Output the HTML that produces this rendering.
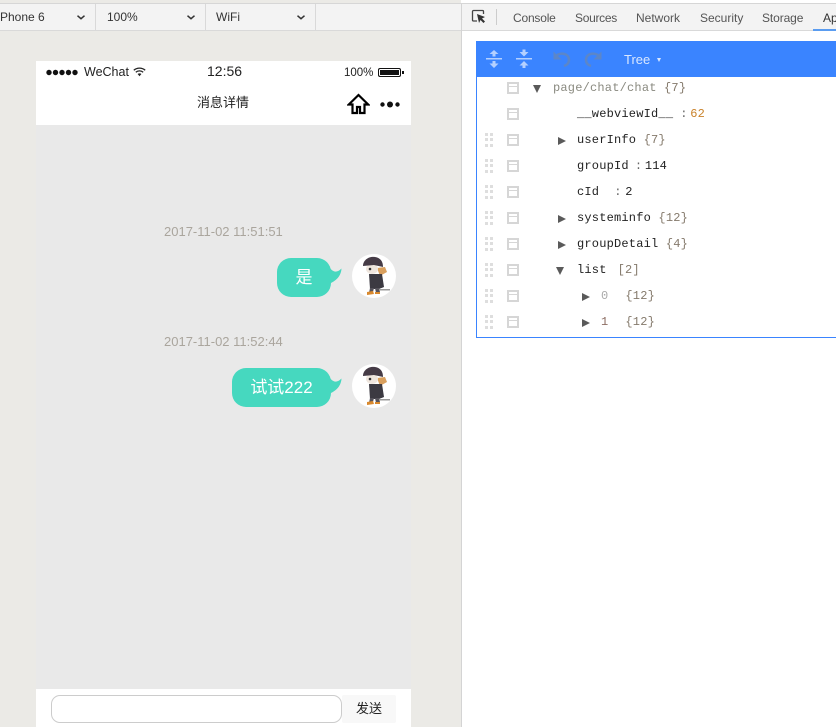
<!DOCTYPE html>
<html><head><meta charset="utf-8">
<style>
html,body{margin:0;padding:0}
body{width:836px;height:727px;overflow:hidden;position:relative;background:#fff;font-family:"Liberation Sans","Noto Sans CJK SC",sans-serif}
.a{position:absolute;white-space:nowrap}
.t{font-size:12px;color:#333;line-height:16px}
.m{position:absolute;white-space:nowrap;font-family:"Liberation Mono",monospace;font-size:12px;letter-spacing:.2px;line-height:16px;color:#222}
.g{color:#8a8a80}
.b{color:#857a6c}
.c{display:inline-block;color:#666;margin:0 6px 0 6px;letter-spacing:0;width:4px}
.cb{position:absolute;left:507px;width:8px;height:8px;border:2px solid #d6d6d6;background:linear-gradient(#d6d6d6,#d6d6d6) 0 2px/100% 1px no-repeat}
.gr{position:absolute;left:485px;width:8px;height:14px;background:
 linear-gradient(#dedede,#dedede) 0 0/3px 3px no-repeat,linear-gradient(#dedede,#dedede) 5px 0/3px 3px no-repeat,
 linear-gradient(#dedede,#dedede) 0 5px/3px 3px no-repeat,linear-gradient(#dedede,#dedede) 5px 5px/3px 3px no-repeat,
 linear-gradient(#dedede,#dedede) 0 11px/3px 3px no-repeat,linear-gradient(#dedede,#dedede) 5px 11px/3px 3px no-repeat}
.r{position:absolute;width:0;height:0;border-left:8px solid #5a5a5a;border-top:4px solid transparent;border-bottom:4px solid transparent}
.d{position:absolute;width:0;height:0;border-top:8px solid #5a5a5a;border-left:4.5px solid transparent;border-right:4.5px solid transparent}
.bub{position:absolute;background:#46d8bf;color:#fff;border-radius:14px;height:39px;line-height:39px;text-align:center;font-size:17px}
.time{position:absolute;left:164px;font-size:13px;color:#aaa59d;line-height:16px;white-space:nowrap}
.av{position:absolute;left:352px;width:44px;height:44px;border-radius:50%;background:#fff;overflow:hidden}
</style></head><body>

<!-- left simulator -->
<div class="a" style="left:0;top:0;width:461px;height:727px;background:#ebeae6"></div>
<div class="a" style="left:0;top:3px;width:836px;height:1px;background:#d6d6d6"></div>
<div class="a" style="left:0;top:4px;width:836px;height:26px;background:#f3f3f3"></div>
<div class="a" style="left:0;top:30px;width:836px;height:1px;background:#d9d9d9"></div>
<div class="a" style="left:95px;top:4px;width:1px;height:26px;background:#d9d9d9"></div>
<div class="a" style="left:205px;top:4px;width:1px;height:26px;background:#d9d9d9"></div>
<div class="a" style="left:315px;top:4px;width:1px;height:26px;background:#d9d9d9"></div>
<div class="a t" style="left:0;top:9px">Phone 6</div>
<div class="a t" style="left:107px;top:9px">100%</div>
<div class="a t" style="left:216px;top:9px">WiFi</div>
<svg class="a" style="left:77px;top:15px" width="8" height="5"><path d="M.5.700l3.500 3L7.500.700" fill="none" stroke="#333" stroke-width="1.500"/></svg>
<svg class="a" style="left:187px;top:15px" width="8" height="5"><path d="M.5.700l3.500 3L7.500.700" fill="none" stroke="#333" stroke-width="1.500"/></svg>
<svg class="a" style="left:297px;top:15px" width="8" height="5"><path d="M.5.700l3.500 3L7.500.700" fill="none" stroke="#333" stroke-width="1.500"/></svg>

<!-- phone -->
<div class="a" style="left:36px;top:61px;width:375px;height:64px;background:#fff"></div>
<div class="a" style="left:36px;top:125px;width:375px;height:564px;background:#e9e9e9"></div>
<div class="a" style="left:36px;top:689px;width:375px;height:38px;background:#fff"></div>
<svg class="a" style="left:46px;top:69px" width="34" height="7"><g fill="#111"><circle cx="3" cy="3.500" r="2.700"/><circle cx="9.500" cy="3.500" r="2.700"/><circle cx="16" cy="3.500" r="2.700"/><circle cx="22.500" cy="3.500" r="2.700"/><circle cx="29" cy="3.500" r="2.700"/></g></svg>
<div class="a" style="left:84px;top:64px;font-size:12.500px;line-height:16px;color:#222">WeChat</div>
<svg class="a" style="left:133px;top:67px" width="13" height="10" viewBox="0 0 13 10"><path d="M.8 3.200C4 .4 9 .4 12.200 3.200M2.800 5.200c2.200-1.800 5.200-1.800 7.400 0" fill="none" stroke="#222" stroke-width="1.300"/><path d="M4.600 7c1.100-.9 2.700-.9 3.800 0L6.500 9.200z" fill="#222"/></svg>
<div class="a" style="left:207px;top:63px;font-size:14px;line-height:16px;color:#222">12:56</div>
<div class="a" style="left:344px;top:65px;font-size:11.500px;line-height:16px;color:#222">100%</div>
<div class="a" style="left:378px;top:68px;width:21px;height:7px;border:1px solid #111;border-radius:2px;background:#111;box-shadow:inset 0 0 0 1px #fff"></div>
<div class="a" style="left:402px;top:71px;width:1.500px;height:3px;background:#111"></div>
<div class="a" style="left:197px;top:95px;font-size:13px;line-height:16px;color:#222">消息详情</div>
<svg class="a" style="left:347px;top:93px" width="23" height="22" viewBox="0 0 23 22"><path d="M11.500 2L1.800 11.500h3.700V20h4.500v-6h3v6h4.500v-8.500h3.700z" fill="none" stroke="#000" stroke-width="2.200"/></svg>
<svg class="a" style="left:379px;top:100px" width="23" height="9"><g fill="#111"><circle cx="3.500" cy="4.500" r="2.200"/><circle cx="11" cy="4.500" r="3"/><circle cx="18.500" cy="4.500" r="2.200"/></g></svg>

<div class="time" style="top:224px">2017-11-02 11:51:51</div>
<div class="time" style="top:334px">2017-11-02 11:52:44</div>

<div class="bub" style="left:277px;top:258px;width:54px">是</div>
<svg class="a" style="left:328px;top:265px" width="14" height="20" viewBox="0 0 14 20"><path d="M2 3Q7 10 13.500 3.500Q13 13 3 18z" fill="#46d8bf"/></svg>
<div class="bub" style="left:232px;top:368px;width:99px">试试222</div>
<svg class="a" style="left:328px;top:375px" width="14" height="20" viewBox="0 0 14 20"><path d="M2 3Q7 10 13.500 3.500Q13 13 3 18z" fill="#46d8bf"/></svg>

<div class="av" style="top:254px"><svg width="44" height="44" viewBox="0 0 44 44"><path d="M25 14l8-1 2 5-7 4z" fill="#d9a05e"/><path d="M17 20h13l2 13-5 2H18z" fill="#3c3a42"/><path d="M18 34h4l-1 4-4 1zM23 34h4l1 4-4 1z" fill="#55525a"/><path d="M15 38l6-1 1 3-7 1zM23 38h5v2h-5z" fill="#d9892e"/><ellipse cx="20" cy="15" rx="6" ry="5" fill="#efe6de"/><circle cx="18" cy="15" r="1.300" fill="#333"/><path d="M11 12c0-6 6-10 12-9s8 5 8 10l-9-2z" fill="#453b46"/><path d="M27 35h11v1.500H27z" fill="#9a9a9a"/></svg></div>
<div class="av" style="top:364px"><svg width="44" height="44" viewBox="0 0 44 44"><path d="M25 14l8-1 2 5-7 4z" fill="#d9a05e"/><path d="M17 20h13l2 13-5 2H18z" fill="#3c3a42"/><path d="M18 34h4l-1 4-4 1zM23 34h4l1 4-4 1z" fill="#55525a"/><path d="M15 38l6-1 1 3-7 1zM23 38h5v2h-5z" fill="#d9892e"/><ellipse cx="20" cy="15" rx="6" ry="5" fill="#efe6de"/><circle cx="18" cy="15" r="1.300" fill="#333"/><path d="M11 12c0-6 6-10 12-9s8 5 8 10l-9-2z" fill="#453b46"/><path d="M27 35h11v1.500H27z" fill="#9a9a9a"/></svg></div>

<div class="a" style="left:51px;top:695px;width:289px;height:26px;border:1px solid #ccc;border-radius:9px;background:#fff"></div>
<div class="a" style="left:342px;top:695px;width:54px;height:28px;background:#f8f8f8;border-radius:2px;text-align:center;line-height:28px;font-size:13px;color:#222">发送</div>

<!-- devtools -->
<div class="a" style="left:461px;top:4px;width:1px;height:723px;background:#d4d4d4"></div>
<svg class="a" style="left:471px;top:9px" width="16" height="16" viewBox="0 0 16 16"><path d="M6 12H2.500a1 1 0 0 1-1-1V2.500a1 1 0 0 1 1-1h9a1 1 0 0 1 1 1V5" fill="none" stroke="#444" stroke-width="1.300"/><path d="M6 5l8 3-3 1.500 3 3-1.500 1.500-3-3L8 14z" fill="#333"/></svg>
<div class="a" style="left:496px;top:9px;width:1px;height:16px;background:#ccc"></div>
<div class="a t" style="left:513px;top:10px;color:#555;letter-spacing:-.2px">Console</div>
<div class="a t" style="left:575px;top:10px;color:#555;letter-spacing:-.3px">Sources</div>
<div class="a t" style="left:636px;top:10px;color:#555">Network</div>
<div class="a t" style="left:700px;top:10px;color:#555">Security</div>
<div class="a t" style="left:762px;top:10px;color:#555;letter-spacing:-.1px">Storage</div>
<div class="a t" style="left:823px;top:10px">App</div>
<div class="a" style="left:813px;top:29px;width:23px;height:2px;background:#5a9cf0"></div>

<div class="a" style="left:476px;top:41px;width:360px;height:296px;border-left:1px solid #3a84ff;border-bottom:1px solid #3a84ff"></div>
<div class="a" style="left:476px;top:41px;width:360px;height:36px;background:#3a84ff"></div>
<svg class="a" style="left:485px;top:48px" width="50" height="22" viewBox="0 0 50 22"><g fill="#b4d0ff"><path d="M1 10h16v1.500H1zM4.500 6l4.500-4 4.500 4h-3v2.500h-3V6zM7.500 13h3v2.500h3L9 20l-4.500-4.500h3z"/><path d="M31 10h16v1.500H31zM34.500 4h3V1.500h3V4h3L39 8.500zM39 13l4.500 4.500h-3V20h-3v-2.500h-3z"/></g></svg>
<svg class="a" style="left:552px;top:50px" width="50" height="19" viewBox="0 0 50 19"><g fill="none" stroke="#5c86c8" stroke-width="2.500"><path d="M4 6c4-4 13-3 13 4 0 3-2 5-5 6"/><path d="M47 6c-4-4-13-3-13 4 0 3 2 5 5 6"/></g><path d="M1.500 1.500v8h8zM49.500 1.500v8h-8z" fill="#5c86c8"/></svg>
<div class="a" style="left:624px;top:52px;font-size:13px;line-height:16px;color:#d9e7ff">Tree</div>
<div class="a" style="left:657px;top:58px;width:0;height:0;border-top:4px solid #d9e7ff;border-left:2.500px solid transparent;border-right:2.500px solid transparent"></div>

<div class="cb" style="top:82px"></div>
<div class="cb" style="top:108px"></div>
<div class="cb" style="top:134px"></div>
<div class="cb" style="top:160px"></div>
<div class="cb" style="top:186px"></div>
<div class="cb" style="top:212px"></div>
<div class="cb" style="top:238px"></div>
<div class="cb" style="top:264px"></div>
<div class="cb" style="top:290px"></div>
<div class="cb" style="top:316px"></div>

<div class="gr" style="top:133px"></div>
<div class="gr" style="top:159px"></div>
<div class="gr" style="top:185px"></div>
<div class="gr" style="top:211px"></div>
<div class="gr" style="top:237px"></div>
<div class="gr" style="top:263px"></div>
<div class="gr" style="top:289px"></div>
<div class="gr" style="top:315px"></div>

<div class="d" style="left:533px;top:85px"></div>
<div class="m g" style="left:553px;top:80px">page/chat/chat <span class="b">{7}</span></div>
<div class="m" style="left:577px;top:106px">__webviewId__<span class="c" style="margin-left:7px">:</span><span style="color:#c9822a">62</span></div>
<div class="r" style="left:558px;top:137px"></div>
<div class="m" style="left:577px;top:132px">userInfo <span class="b">{7}</span></div>
<div class="m" style="left:577px;top:158px">groupId<span class="c">:</span>114</div>
<div class="m" style="left:577px;top:184px">cId<span class="c" style="margin-left:15px;margin-right:7px">:</span>2</div>
<div class="r" style="left:558px;top:215px"></div>
<div class="m" style="left:577px;top:210px">systeminfo <span class="b">{12}</span></div>
<div class="r" style="left:558px;top:241px"></div>
<div class="m" style="left:577px;top:236px">groupDetail <span class="b">{4}</span></div>
<div class="d" style="left:556px;top:267px"></div>
<div class="m" style="left:577px;top:262px">list<span class="b" style="margin-left:11px">[2]</span></div>
<div class="r" style="left:582px;top:293px"></div>
<div class="m" style="left:601px;top:288px"><span style="color:#aaa">0</span><span class="b" style="margin-left:17px">{12}</span></div>
<div class="r" style="left:582px;top:319px"></div>
<div class="m" style="left:601px;top:314px"><span style="color:#8d6e63">1</span><span class="b" style="margin-left:17px">{12}</span></div>

</body></html>
